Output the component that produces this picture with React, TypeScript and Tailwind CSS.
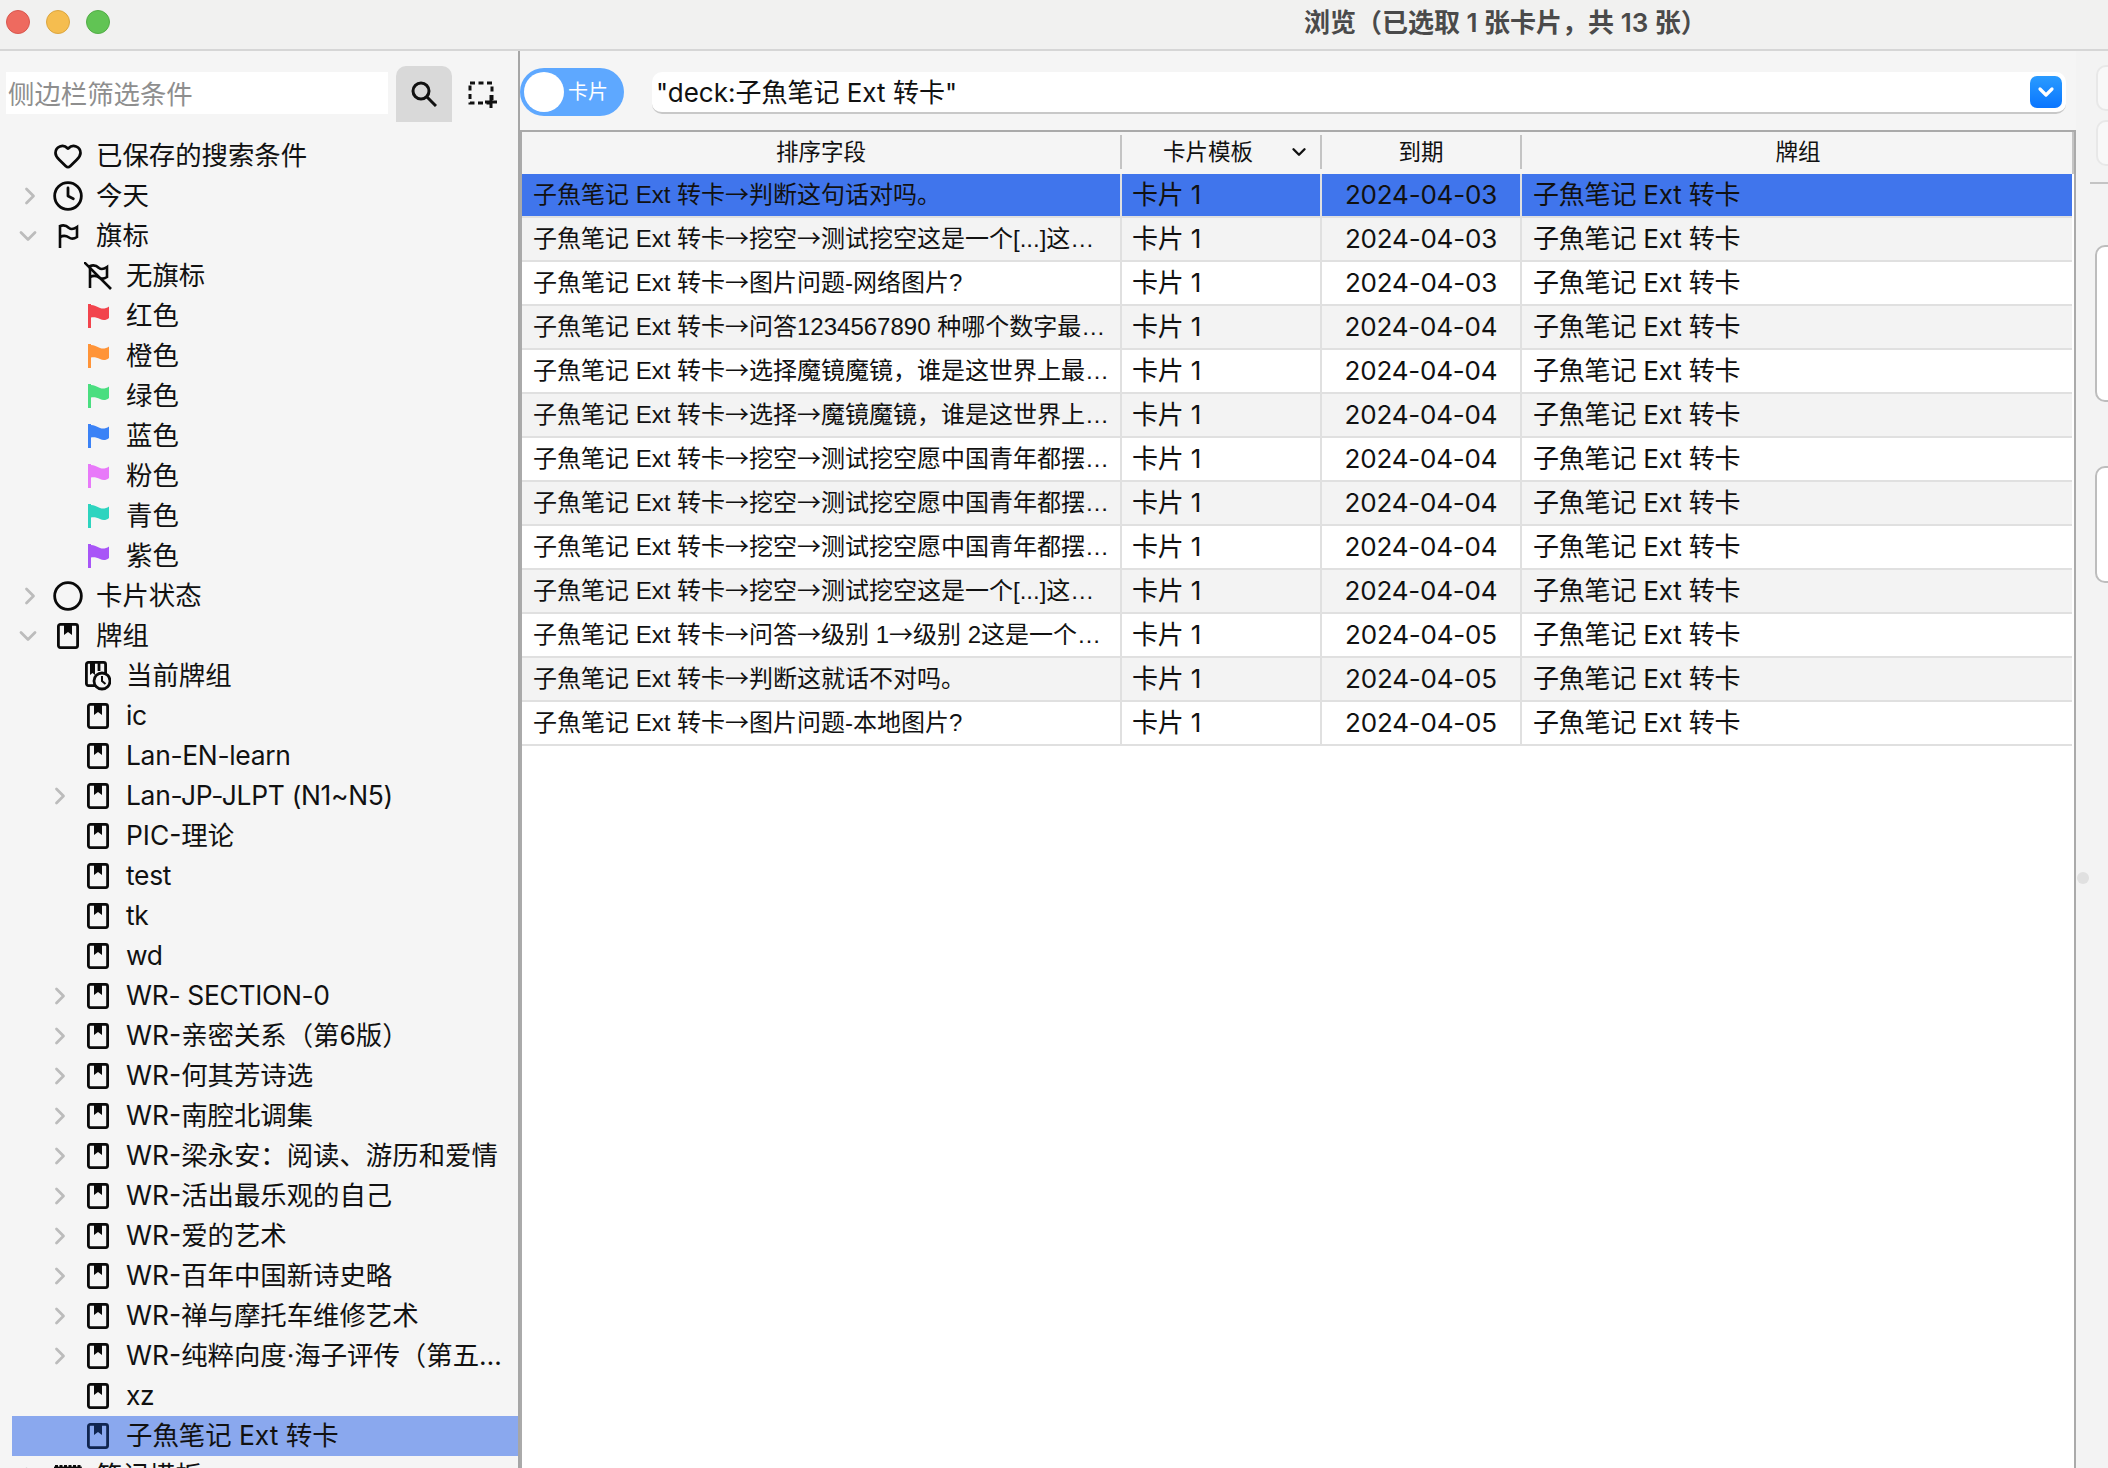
import { ChevronDown, ChevronRight, Circle, Clock, Heart } from "lucide-react";

const Flag = ({ color }: { color: string }) => (
  <svg width="21" height="24" viewBox="0 0 21 24" fill={color}>
    <path d="M0 0h3v1c3 0 6 1.500 9 3 3 1.200 6 .5 9-1.500v11.500c-3 2.500-6 2.500-9 1-3-1.500-6-2-9-1.500V24H0z" />
  </svg>
);

const FlagOutline = ({ crossed }: { crossed?: boolean }) => (
  <svg width="28" height="28" viewBox="0 0 28 28" fill="none" stroke="currentColor" strokeWidth="2.600">
    <path d="M6 3v23" />
    <path d="M6 4c4-1.500 7 0 9 2 2 1.500 5 1 8-1v10c-3 2-6 2-8 .5-3-2-6-2-9-.5" />
    {crossed && <path d="M0 0l27 27" />}
  </svg>
);

const Book = () => (
  <svg width="22" height="26" viewBox="0 0 22 26" fill="none" stroke="currentColor" strokeWidth="2.800">
    <rect x="1.400" y="1.400" width="19.200" height="23.200" rx="2" />
    <path d="M7 1h8v11l-4-3-4 3z" fill="currentColor" stroke="none" />
  </svg>
);

const BookClock = () => (
  <svg width="26" height="30" viewBox="0 0 26 30" fill="none" stroke="currentColor" strokeWidth="2.800">
    <rect x="1.400" y="1.400" width="19.200" height="23.200" rx="2" />
    <path d="M5 1h5v13l-2.500-2-2.500 2z" fill="currentColor" stroke="none" />
    <path d="M14 2v8" />
    <circle cx="17" cy="20" r="8" fill="#f5f5f5" />
    <path d="M17 15v5l3.500 3" strokeWidth="2" />
  </svg>
);

const Template = () => (
  <svg width="28" height="26" viewBox="0 0 28 26" fill="none" stroke="currentColor">
    <path d="M1 4h26" strokeWidth="4" strokeDasharray="3 1.500" />
    <rect x="1.400" y="5" width="25" height="20" strokeWidth="2.800" />
  </svg>
);

const SelectAdd = () => (
  <svg width="30" height="28" viewBox="0 0 30 28" fill="none" stroke="#111111">
    <rect x="2" y="2" width="22" height="20" strokeWidth="3" strokeDasharray="5 3.500" />
    <path d="M23 14v13M17 21h12" strokeWidth="3" fill="none" />
  </svg>
);

const SearchGlass = () => (
  <svg width="26" height="26" viewBox="0 0 26 26" fill="none" stroke="#111111" strokeWidth="3">
    <circle cx="10" cy="10" r="8" />
    <path d="M16 16l9 9" />
  </svg>
);

type Item = {
  label: string;
  icon: React.ReactNode;
  child?: boolean;
  arrow?: "right" | "down";
};

const flags: [string, string][] = [
  ["红色", "#f2444d"],
  ["橙色", "#ff9438"],
  ["绿色", "#4ade80"],
  ["蓝色", "#3b82f6"],
  ["粉色", "#e879f9"],
  ["青色", "#2dd4bf"],
  ["紫色", "#a855f7"],
];

const items: Item[] = [
  { label: "已保存的搜索条件", icon: <Heart size={30} strokeWidth={2.200} /> },
  { label: "今天", icon: <Clock size={32} strokeWidth={2.100} />, arrow: "right" },
  { label: "旗标", icon: <FlagOutline />, arrow: "down" },
  { label: "无旗标", icon: <FlagOutline crossed />, child: true },
  ...flags.map(([label, color]) => ({ label, icon: <Flag color={color} />, child: true })),
  { label: "卡片状态", icon: <Circle size={32} strokeWidth={2.100} />, arrow: "right" },
  { label: "牌组", icon: <Book />, arrow: "down" },
  { label: "当前牌组", icon: <BookClock />, child: true },
  { label: "ic", icon: <Book />, child: true },
  { label: "Lan-EN-learn", icon: <Book />, child: true },
  { label: "Lan-JP-JLPT (N1~N5)", icon: <Book />, child: true, arrow: "right" },
  { label: "PIC-理论", icon: <Book />, child: true },
  { label: "test", icon: <Book />, child: true },
  { label: "tk", icon: <Book />, child: true },
  { label: "wd", icon: <Book />, child: true },
  { label: "WR- SECTION-0", icon: <Book />, child: true, arrow: "right" },
  { label: "WR-亲密关系\uFF08第6版\uFF09", icon: <Book />, child: true, arrow: "right" },
  { label: "WR-何其芳诗选", icon: <Book />, child: true, arrow: "right" },
  { label: "WR-南腔北调集", icon: <Book />, child: true, arrow: "right" },
  { label: "WR-梁永安\uFF1A阅读、游历和爱情", icon: <Book />, child: true, arrow: "right" },
  { label: "WR-活出最乐观的自己", icon: <Book />, child: true, arrow: "right" },
  { label: "WR-爱的艺术", icon: <Book />, child: true, arrow: "right" },
  { label: "WR-百年中国新诗史略", icon: <Book />, child: true, arrow: "right" },
  { label: "WR-禅与摩托车维修艺术", icon: <Book />, child: true, arrow: "right" },
  { label: "WR-纯粹向度·海子评传\uFF08第五…", icon: <Book />, child: true, arrow: "right" },
  { label: "xz", icon: <Book />, child: true },
];

const TreeRow = ({ item, selected }: { item: Item; selected?: boolean }) => (
  <div
    className={`flex h-10 shrink-0 items-center ${item.child ? "pl-[38px]" : "pl-[8px]"} ${
      selected ? "bg-[#8aa8ee]" : ""
    }`}
  >
    <div className="flex w-5 shrink-0 justify-center text-[#bcbcbc]">
      {item.arrow === "right" && <ChevronRight size={28} strokeWidth={2.400} className="shrink-0" />}
      {item.arrow === "down" && <ChevronDown size={28} strokeWidth={2.400} className="-ml-[4px] shrink-0" />}
    </div>
    <div className={`ml-3 flex w-8 shrink-0 justify-center ${selected ? "text-[#10254f]" : "text-[#0a0a0a]"}`}>
      {item.icon}
    </div>
    {/* latin-only names run a bit narrower than Inter does */}
    <div
      className={`ml-3 whitespace-nowrap text-[26.4px] text-[#111111] ${
        /^[\x00-\x7f]+$/.test(item.label) ? "tracking-[-0.3px]" : ""
      }`}
    >
      {item.label}
    </div>
  </div>
);

const rows: [string, string][] = [
  ["子魚笔记 Ext 转卡→判断这句话对吗。", "2024-04-03"],
  ["子魚笔记 Ext 转卡→挖空→测试挖空这是一个[...]这…", "2024-04-03"],
  ["子魚笔记 Ext 转卡→图片问题-网络图片?", "2024-04-03"],
  ["子魚笔记 Ext 转卡→问答1234567890 种哪个数字最…", "2024-04-04"],
  ["子魚笔记 Ext 转卡→选择魔镜魔镜\uFF0C谁是这世界上最…", "2024-04-04"],
  ["子魚笔记 Ext 转卡→选择→魔镜魔镜\uFF0C谁是这世界上…", "2024-04-04"],
  ["子魚笔记 Ext 转卡→挖空→测试挖空愿中国青年都摆…", "2024-04-04"],
  ["子魚笔记 Ext 转卡→挖空→测试挖空愿中国青年都摆…", "2024-04-04"],
  ["子魚笔记 Ext 转卡→挖空→测试挖空愿中国青年都摆…", "2024-04-04"],
  ["子魚笔记 Ext 转卡→挖空→测试挖空这是一个[...]这…", "2024-04-04"],
  ["子魚笔记 Ext 转卡→问答→级别 1→级别 2这是一个…", "2024-04-05"],
  ["子魚笔记 Ext 转卡→判断这就话不对吗。", "2024-04-05"],
  ["子魚笔记 Ext 转卡→图片问题-本地图片?", "2024-04-05"],
];

const TableRow = ({ title, date, index }: { title: string; date: string; index: number }) => {
  const bg = index === 0 ? "bg-[#4075ec]" : index % 2 === 1 ? "bg-[#f3f3f3]" : "bg-white";
  const parts = title.split("→");
  return (
    <div className="grid w-[1550px] grid-cols-[598px_198px_198px_550px] gap-x-[2px] border-b-2 border-[#e0e0e0] bg-[#e0e0e0] text-[26px] tracking-[-0.2px] text-[#111111]">
      <div
        className={`flex h-[42px] items-center overflow-hidden whitespace-pre pb-[2px] pl-[11px] font-['Liberation_Sans','Noto_Sans_CJK_SC',sans-serif] text-[24px] tracking-normal ${bg}`}
      >
        <span>
          {parts.map((part, i) => (
            <span key={i}>
              {i > 0 && <span className="font-['Noto_Sans_CJK_SC',sans-serif]">→</span>}
              {part}
            </span>
          ))}
        </span>
      </div>
      <div className={`flex h-[42px] items-center pb-[2px] pl-[10px] ${bg}`}>卡片 1</div>
      <div className={`flex h-[42px] items-center justify-center pb-[2px] ${bg}`}>{date}</div>
      <div className={`flex h-[42px] items-center pb-[2px] pl-[11px] ${bg}`}>子魚笔记 Ext 转卡</div>
    </div>
  );
};

export default function App() {
  return (
    <div className="flex h-[1468px] w-[2108px] flex-col overflow-hidden bg-[#f5f5f5] font-['Inter','Noto_Sans_CJK_SC',sans-serif]">
      <div className="flex h-[51px] shrink-0 items-center border-b-2 border-[#d6d6d6] bg-[#f1f1f0] pb-[5px] pl-[6px]">
        <div className="flex gap-4">
          <div className="h-6 w-6 rounded-full border border-[#d9574e] bg-[#ee6a5f]" />
          <div className="h-6 w-6 rounded-full border border-[#dca63f] bg-[#f5bd4f]" />
          <div className="h-6 w-6 rounded-full border border-[#52ad46] bg-[#61c454]" />
        </div>
        <div className="ml-[1194px] whitespace-nowrap text-[26px] font-semibold text-[#4a4a4a]">
          {"浏览\uFF08已选取 1 张卡片\uFF0C共 13 张\uFF09"}
        </div>
      </div>

      <div className="flex min-h-0 flex-1">
        {/* sidebar */}
        <div className="flex w-[520px] shrink-0 flex-col overflow-hidden border-r-2 border-[#a6a6a6]">
          <div className="flex h-[85px] shrink-0 items-start pl-[6px]">
            <input
              placeholder="侧边栏筛选条件"
              className="mt-[21px] h-[42px] w-[382px] bg-white pl-[2px] pt-[2px] text-[26.4px] outline-none placeholder:text-[#8e8e8e]"
            />
            <div className="ml-2 mt-[15px] flex h-14 w-14 items-center justify-center rounded-t-[10px] bg-[#d9d9d9]">
              <SearchGlass />
            </div>
            <div className="ml-4 mt-[30px]">
              <SelectAdd />
            </div>
          </div>
          <div className="flex flex-col pl-3">
            {items.map((item, i) => (
              <TreeRow key={i} item={item} />
            ))}
            <TreeRow item={{ label: "子魚笔记 Ext 转卡", icon: <Book />, child: true }} selected />
            <TreeRow item={{ label: "笔记模板", icon: <Template />, arrow: "right" }} />
          </div>
        </div>

        {/* browser table */}
        <div className="flex w-[1556px] shrink-0 flex-col">
          <div className="flex h-[79px] shrink-0 items-center pt-[3px]">
            <div className="flex h-12 w-[104px] items-center rounded-full bg-[#5ea8ff] pl-1">
              <div className="h-10 w-10 rounded-full bg-white" />
              <div className="ml-1 text-[20px] text-white">卡片</div>
            </div>
            <div className="ml-[28px] mt-[2px] flex h-[42px] w-[1414px] items-center justify-between rounded-[10px] border-b-2 border-[#c8c8c8] bg-white pl-[4px] pr-[4px]">
              <div className="text-[26px] text-[#111111]">"deck:子魚笔记 Ext 转卡"</div>
              <div className="flex h-8 w-8 items-center justify-center rounded-[7px] bg-gradient-to-b from-[#2a9bff] to-[#0a75ff]">
                <ChevronDown size={24} strokeWidth={3.200} className="text-white" />
              </div>
            </div>
          </div>
          <div className="flex min-h-0 flex-1 flex-col border-x-2 border-t-2 border-[#aaaaaa] bg-white">
            <div className="grid h-[42px] w-[1552px] shrink-0 grid-cols-[600px_200px_200px_552px] border-r-2 border-[#c4c4c4] bg-[#f5f5f5] pb-[2px] text-[22.5px] text-[#111111]">
              <div className="my-[3px] flex items-center justify-center border-r-2 border-[#c4c4c4]">排序字段</div>
              <div className="my-[3px] flex items-center justify-between border-r-2 border-[#c4c4c4] pl-[41px] pr-[10px]">
                <span>卡片模板</span>
                <ChevronDown size={22} strokeWidth={2.600} />
              </div>
              <div className="my-[3px] flex items-center justify-center border-r-2 border-[#c4c4c4]">到期</div>
              <div className="my-[3px] flex items-center justify-center">牌组</div>
            </div>
            {rows.map(([title, date], i) => (
              <TableRow key={i} title={title} date={date} index={i} />
            ))}
          </div>
        </div>

        {/* inspector strip, mostly cut off by the window edge */}
        <div className="flex min-w-0 flex-1 flex-col overflow-hidden bg-[#f3f3f3]">
          <div className="ml-5 mt-[14px] h-[46px] w-10 shrink-0 rounded-[10px] border-2 border-[#e8e8e8] bg-[#f8f8f8]" />
          <div className="ml-5 mt-[9px] flex h-[46px] w-10 shrink-0 items-center rounded-[10px] border-2 border-[#e8e8e8] bg-[#f8f8f8] pl-[5px]">
            <ChevronRight size={18} strokeWidth={2.600} className="rotate-180 text-[#777777]" />
          </div>
          <div className="ml-[14px] mt-[16px] h-[2px] shrink-0 bg-[#c4c4c4]" />
          <div className="ml-[19px] mt-[61px] h-[157px] w-10 shrink-0 rounded-[10px] border-2 border-[#bdbdbd] bg-white" />
          <div className="ml-[19px] mt-[64px] h-[117px] w-10 shrink-0 rounded-[10px] border-2 border-[#bdbdbd] bg-white" />
          <div className="ml-[1px] mt-[289px] h-3 w-3 shrink-0 rounded-full bg-[#e0e0e0]" />
        </div>
      </div>
    </div>
  );
}
